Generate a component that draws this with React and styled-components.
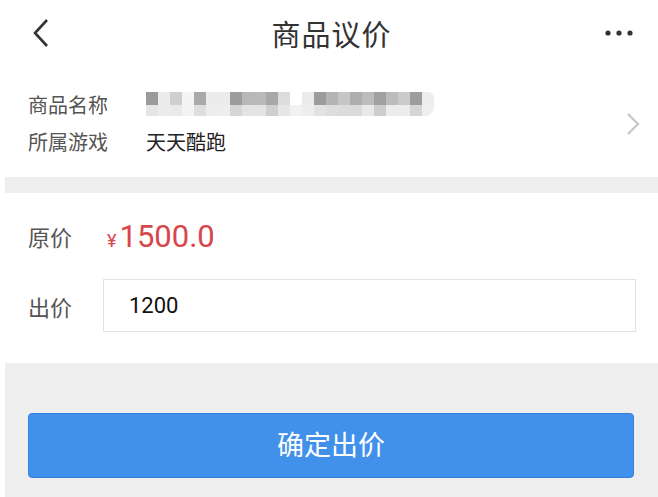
import styled, { createGlobalStyle } from 'styled-components';

const GlobalStyle = createGlobalStyle`
  html, body {
    margin: 0;
    padding: 0;
    background: #fff;
  }
  body {
    font-family: Roboto, "Noto Sans CJK SC", sans-serif;
    -webkit-font-smoothing: antialiased;
  }
`;

const Page = styled.div`
  width: 658px;
  height: 497px;
  padding-left: 5px;
  box-sizing: border-box;
  display: flex;
  flex-direction: column;
  background: #fff;
  overflow: hidden;
`;

const Header = styled.header`
  height: 70px;
  display: flex;
  align-items: center;
  justify-content: space-between;
  padding: 0 24px 0 27px;
  position: relative;
`;

const Title = styled.h1`
  margin: 0;
  position: absolute;
  left: 0;
  right: 0;
  top: 12px;
  text-align: center;
  font-size: 29px;
  font-weight: 400;
  color: #333;
  letter-spacing: 1px;
  pointer-events: none;
`;

const IconButton = styled.button`
  border: 0;
  background: none;
  padding: 0;
  display: flex;
  align-items: center;
  margin-top: -4px;
`;

const InfoSection = styled.section`
  height: 107px;
  display: flex;
  align-items: center;
  padding: 0 18px 0 23px;
  box-sizing: border-box;
`;

const InfoRows = styled.div`
  flex: 1;
  display: flex;
  flex-direction: column;
  gap: 13px;
  margin-top: -2px;
`;

const InfoRow = styled.div`
  display: flex;
  align-items: center;
  height: 24px;
`;

const InfoLabel = styled.span`
  width: 118px;
  font-size: 20px;
  color: #555;
`;

const InfoValue = styled.span`
  font-size: 20px;
  color: #222;
`;

const Mosaic = styled.div`
  display: grid;
  grid-template-columns: repeat(24, 12px);
  grid-template-rows: 13px 11px;
  border-radius: 0 6px 8px 0 / 0 6px 10px 0;
  overflow: hidden;
`;

const Cell = styled.div`
  background: ${({ $shade }) => $shade};
`;

const Gap = styled.div`
  height: ${({ $h }) => $h}px;
  background: #eeeeee;
`;

const PriceSection = styled.section`
  height: 170px;
  display: flex;
  flex-direction: column;
  padding: 0 22px 0 23px;
  box-sizing: border-box;
`;

const PriceRow = styled.div`
  display: flex;
  align-items: center;
  height: ${({ $h }) => $h}px;
`;

const PriceLabel = styled.span`
  width: ${({ $w }) => $w}px;
  font-size: 22px;
  color: #555;
`;

const Price = styled.span`
  color: #d9464a;
  display: flex;
  align-items: baseline;
`;

const Yen = styled.span`
  font-size: 18px;
  margin-right: 3px;
`;

const PriceNumber = styled.span`
  font-size: 31px;
`;

const Input = styled.input`
  flex: 1;
  height: 53px;
  box-sizing: border-box;
  border: 1px solid #e2e2e2;
  padding: 0 0 0 25px;
  font-family: Roboto, "Noto Sans CJK SC", sans-serif;
  font-size: 22px;
  color: #111;
  outline: none;
`;

const Footer = styled.div`
  flex: 1;
  background: #eeeeee;
  padding: 50px 24px 0 23px;
`;

const SubmitButton = styled.button`
  width: 100%;
  height: 65px;
  border: 1px solid #3580dc;
  border-radius: 4px;
  background: #4190ea;
  color: #fff;
  font-family: "Noto Sans CJK SC", sans-serif;
  font-size: 27px;
  letter-spacing: 0;
  padding: 0 0 4px;
`;

const topShades = [
  '#9a9a9a', '#ececec', '#cfcfcf', '#f4f4f4', '#a9a9a9', '#ececec',
  '#ececec', '#9c9c9c', '#b8b8b8', '#b9b9b9', '#a8a8a8', '#dcdcdc',
  '#ffffff', '#ebebeb', '#9c9c9c', '#b4b4b4', '#c6c6c6', '#aeaeae',
  '#bcbcbc', '#a0a0a0', '#bcbcbc', '#cbcbcb', '#9d9d9d', '#ededed',
];

const bottomShades = [
  '#e6e6e6', '#ececec', '#e9e9e9', '#f3f3f3', '#dedede', '#ededed',
  '#eeeeee', '#d6d6d6', '#e3e3e3', '#e3e3e3', '#cfcfcf', '#e6e6e6',
  '#f2f2f2', '#eeeeee', '#e2e2e2', '#dddddd', '#dcdcdc', '#dadada',
  '#e9e9e9', '#cdcdcd', '#ececec', '#ececec', '#d6d6d6', '#eeeeee',
];

const BackIcon = () => (
  <svg width="20" height="30" viewBox="0 0 20 30">
    <polyline points="15,2 3,15 15,28" fill="none" stroke="#333" strokeWidth="2.6" />
  </svg>
);

const MoreIcon = () => (
  <svg width="30" height="8" viewBox="0 0 30 8">
    <circle cx="4" cy="4" r="2.6" fill="#333" />
    <circle cx="15" cy="4" r="2.6" fill="#333" />
    <circle cx="26" cy="4" r="2.6" fill="#333" />
  </svg>
);

const ChevronRight = () => (
  <svg width="14" height="24" viewBox="0 0 14 24">
    <polyline points="2,2 12,12 2,22" fill="none" stroke="#c9c9c9" strokeWidth="2.4" />
  </svg>
);

export default function App() {
  return (
    <>
      <GlobalStyle />
      <Page>
        <Header>
          <IconButton>
            <BackIcon />
          </IconButton>
          <Title>商品议价</Title>
          <IconButton>
            <MoreIcon />
          </IconButton>
        </Header>

        <InfoSection>
          <InfoRows>
            <InfoRow>
              <InfoLabel>商品名称</InfoLabel>
              <Mosaic>
                {topShades.map((s, i) => (
                  <Cell key={`t${i}`} $shade={s} />
                ))}
                {bottomShades.map((s, i) => (
                  <Cell key={`b${i}`} $shade={s} />
                ))}
              </Mosaic>
            </InfoRow>
            <InfoRow>
              <InfoLabel>所属游戏</InfoLabel>
              <InfoValue>天天酷跑</InfoValue>
            </InfoRow>
          </InfoRows>
          <ChevronRight />
        </InfoSection>

        <Gap $h={16} />

        <PriceSection>
          <PriceRow $h={86}>
            <PriceLabel $w={79}>原价</PriceLabel>
            <Price>
              <Yen>¥</Yen>
              <PriceNumber>1500.0</PriceNumber>
            </Price>
          </PriceRow>
          <PriceRow $h={53}>
            <PriceLabel $w={75}>出价</PriceLabel>
            <Input defaultValue="1200" />
          </PriceRow>
        </PriceSection>

        <Footer>
          <SubmitButton>确定出价</SubmitButton>
        </Footer>
      </Page>
    </>
  );
}
